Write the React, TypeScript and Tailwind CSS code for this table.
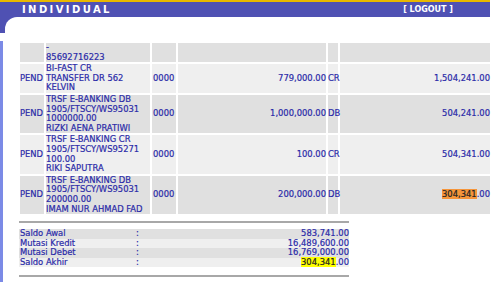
import React from "react";

type Row = {
  status: string;
  desc: string[];
  branch: string;
  amount: string;
  type: string;
  balance: string;
  mark?: boolean;
};

const rows: Row[] = [
  { status: "", desc: ["-", "85692716223"], branch: "", amount: "", type: "", balance: "" },
  { status: "PEND", desc: ["BI-FAST CR", "TRANSFER DR 562", "KELVIN"], branch: "0000", amount: "779,000.00", type: "CR", balance: "1,504,241.00" },
  { status: "PEND", desc: ["TRSF E-BANKING DB", "1905/FTSCY/WS95031", "1000000.00", "RIZKI AENA PRATIWI"], branch: "0000", amount: "1,000,000.00", type: "DB", balance: "504,241.00" },
  { status: "PEND", desc: ["TRSF E-BANKING CR", "1905/FTSCY/WS95271", "100.00", "RIKI SAPUTRA"], branch: "0000", amount: "100.00", type: "CR", balance: "504,341.00" },
  { status: "PEND", desc: ["TRSF E-BANKING DB", "1905/FTSCY/WS95031", "200000.00", "IMAM NUR AHMAD FAD"], branch: "0000", amount: "200,000.00", type: "DB", balance: "304,341.00", mark: true },
];

const summary = [
  { label: "Saldo Awal", value: "583,741.00" },
  { label: "Mutasi Kredit", value: "16,489,600.00" },
  { label: "Mutasi Debet", value: "16,769,000.00" },
  { label: "Saldo Akhir", value: "304,341.00", mark: true },
];

export default function App() {
  return (
    <div className="w-[500px] h-[282px] overflow-hidden bg-white text-[#2a2aa8] text-[8.4px] leading-[9.6px] font-['DejaVu_Sans',Verdana,sans-serif]">
      {/* top bar */}
      <div className="w-[490px] h-[2px] bg-[#e8b800]" />
      <div className="w-[490px] h-[15px] bg-[#4f51b3] flex items-center justify-between pl-[22px] pr-[37px] text-white font-bold">
        <span className="text-[10px] tracking-[2.4px]">INDIVIDUAL</span>
        <span className="text-[8px]">[ LOGOUT ]</span>
      </div>
      <div className="w-[490px] h-[16px] bg-[#4f51b3]">
        <div className="ml-[5px] h-full bg-white rounded-tl-[12px]" />
      </div>
      <div className="h-[8px]" />

      {/* content */}
      <div className="border-l-[3px] border-[#7b8ae6] h-[260px] pl-[15px] [-webkit-text-stroke:0.2px]">
        <table className="table-fixed border-separate border-spacing-[2px] w-[474px]">
          <colgroup>
            <col className="w-[24px]" />
            <col className="w-[104px]" />
            <col className="w-[24px]" />
            <col className="w-[148px]" />
            <col className="w-[10px]" />
            <col className="w-[150px]" />
          </colgroup>
          <tbody>
            {rows.map((r, i) => (
              <tr key={i} className={i % 2 === 0 ? "bg-[#e0e0e0]" : "bg-[#efefef]"}>
                <td className="p-0 align-middle whitespace-nowrap">{r.status}</td>
                <td className="p-0 align-middle whitespace-nowrap">
                  {r.desc.map((d, j) => (
                    <div key={j}>{d}</div>
                  ))}
                </td>
                <td className="p-0 pl-[1px] align-middle whitespace-nowrap">{r.branch}</td>
                <td className="p-0 align-middle text-right whitespace-nowrap">{r.amount}</td>
                <td className="p-0 align-middle whitespace-nowrap overflow-visible">{r.type}</td>
                <td className="p-0 align-middle text-right whitespace-nowrap">
                  {r.mark ? (
                    <>
                      <span className="bg-[#f5953a] text-[#222]">304,341</span>.00
                    </>
                  ) : (
                    r.balance
                  )}
                </td>
              </tr>
            ))}
          </tbody>
        </table>

        {/* summary */}
        <div className="w-[330px] ml-[1px] mt-[5px]">
          <div className="border-t-2 border-[#a8a8a8]" />
          <div className="mt-[6px]">
            {summary.map((s, i) => (
              <div key={s.label} className={`flex ${i % 2 === 0 ? "bg-[#e0e0e0]" : "bg-[#efefef]"}`}>
                <span className="w-[117px] pl-[1px]">{s.label}</span>
                <span>:</span>
                <span className="flex-1 text-right">
                  {s.mark ? (
                    <>
                      <span className="bg-[#ffff00] text-[#222]">304,341</span>.00
                    </>
                  ) : (
                    s.value
                  )}
                </span>
              </div>
            ))}
          </div>
          <div className="mt-[8px] border-t-2 border-[#a8a8a8]" />
        </div>
      </div>
    </div>
  );
}
